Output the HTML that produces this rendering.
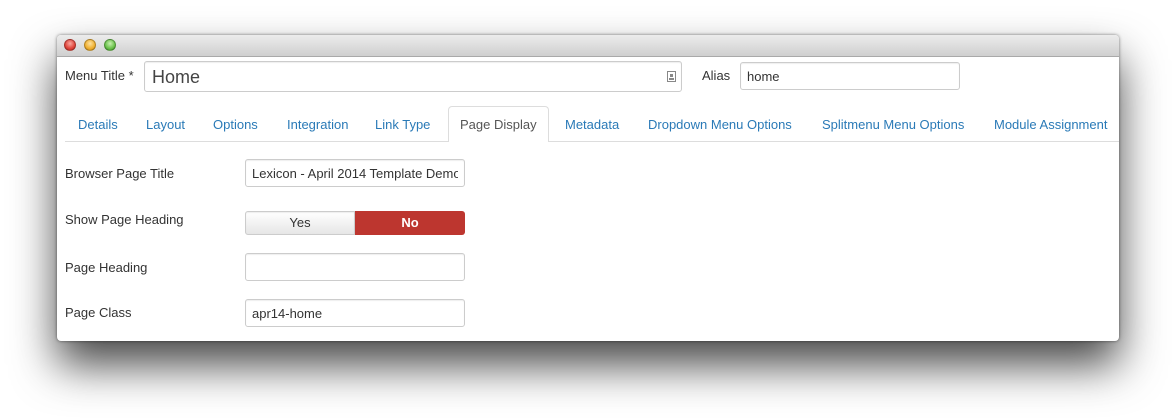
<!DOCTYPE html>
<html><head><style>
body{margin:0;width:1176px;height:420px;background:#fff;position:relative;overflow:hidden;font-family:"Liberation Sans",Arial,sans-serif;font-size:13px;color:#333}
.win{position:absolute;left:57px;top:35px;width:1062px;height:306px;background:#fff;border-radius:4px;box-shadow:0 24px 44px rgba(0,0,0,.72),0 0 3px rgba(0,0,0,.5);overflow:hidden}
.tb{position:absolute;left:0;top:0;width:100%;height:21px;background:linear-gradient(#ececec,#cfcfcf);border-bottom:1px solid #a9a9a9}
.dot{position:absolute;top:4px;width:12px;height:12px;border-radius:50%;box-sizing:border-box;border:1px solid rgba(0,0,0,.25)}
.a{position:absolute;white-space:nowrap}
.in{position:absolute;background:#fff;border:1px solid #ccc;border-radius:3px;box-sizing:border-box;box-shadow:inset 0 1px 1px rgba(0,0,0,.07)}
.tab{position:absolute;top:82px;color:#2a7ab7;font-size:13px}
</style></head><body>
<div class="win">
<div class="tb">
<div class="dot" style="left:7px;background:radial-gradient(circle at 50% 35%,#f9a8a0,#e0443a 60%,#b02a22)"></div>
<div class="dot" style="left:27px;background:radial-gradient(circle at 50% 35%,#fde2a0,#f0b030 60%,#c0861a)"></div>
<div class="dot" style="left:47px;background:radial-gradient(circle at 50% 35%,#c8f0b0,#6ac24a 60%,#3f8e2a)"></div>
</div>
<div class="a" style="left:8px;top:33px">Menu Title *</div>
<div class="in" style="left:87px;top:26px;width:538px;height:31px"><span class="a" style="left:7px;top:5px;font-size:18px;color:#444">Home</span>
<div class="a" style="right:5px;top:9px;width:9px;height:11px;border:1px solid #888;box-sizing:border-box"><div style="width:3px;height:3px;background:#888;margin:2px auto 1px"></div><div style="width:5px;height:2px;background:#888;margin:0 auto"></div></div></div>
<div class="a" style="left:645px;top:33px">Alias</div>
<div class="in" style="left:683px;top:27px;width:220px;height:28px"><span class="a" style="left:6px;top:6px">home</span></div>
<div style="position:absolute;left:8px;top:106px;width:1054px;height:1px;background:#ddd"></div>
<div style="position:absolute;left:391px;top:71px;width:101px;height:36px;background:#fff;border:1px solid #ddd;border-bottom:none;border-radius:4px 4px 0 0;box-sizing:border-box"></div>
<span class="tab" style="left:21px">Details</span>
<span class="tab" style="left:89px">Layout</span>
<span class="tab" style="left:156px">Options</span>
<span class="tab" style="left:230px">Integration</span>
<span class="tab" style="left:318px">Link Type</span>
<span class="tab" style="left:403px;color:#555">Page Display</span>
<span class="tab" style="left:508px">Metadata</span>
<span class="tab" style="left:591px">Dropdown Menu Options</span>
<span class="tab" style="left:765px">Splitmenu Menu Options</span>
<span class="tab" style="left:937px">Module Assignment</span>
<div class="a" style="left:8px;top:131px">Browser Page Title</div>
<div class="in" style="left:188px;top:124px;width:220px;height:28px;overflow:hidden"><div style="position:absolute;left:6px;top:6px;width:206px;overflow:hidden;white-space:nowrap">Lexicon - April 2014 Template Demo</div></div>
<div class="a" style="left:8px;top:177px">Show Page Heading</div>
<div class="in" style="left:188px;top:176px;width:110px;height:24px;border-radius:3px 0 0 3px;background:linear-gradient(#fff,#e6e6e6);text-align:center;line-height:22px">Yes</div>
<div style="position:absolute;left:298px;top:176px;width:110px;height:24px;background:#bd362f;border-radius:0 3px 3px 0;color:#fff;font-weight:bold;text-align:center;line-height:24px">No</div>
<div class="a" style="left:8px;top:225px">Page Heading</div>
<div class="in" style="left:188px;top:218px;width:220px;height:28px"></div>
<div class="a" style="left:8px;top:270px">Page Class</div>
<div class="in" style="left:188px;top:264px;width:220px;height:28px"><span class="a" style="left:6px;top:6px">apr14-home</span></div>
</div>
</body></html>
